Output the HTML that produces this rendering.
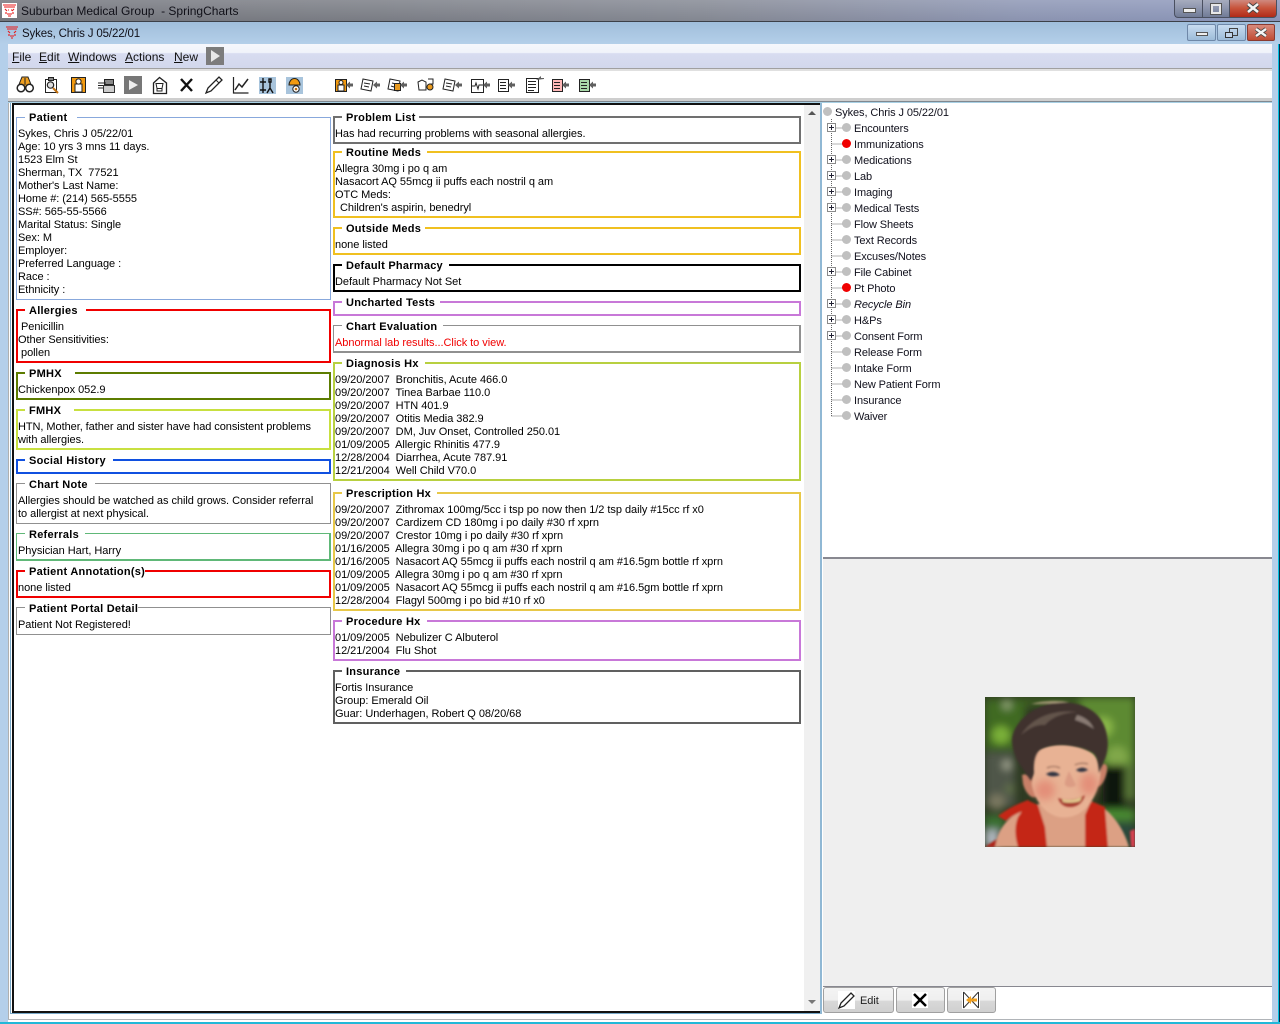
<!DOCTYPE html>
<html><head><meta charset="utf-8"><title>SpringCharts</title>
<style>
html,body{margin:0;padding:0;background:#fff}
#p{position:relative;width:1280px;height:1024px;overflow:hidden;background:#fff;font:11px/13px "Liberation Sans",sans-serif;color:#000}
#p div{position:absolute}
.b{box-sizing:border-box;background:#fff}
.t{font-weight:bold;background:#fff;padding:0 6px 0 4px;height:13px;white-space:nowrap;font-size:11px;letter-spacing:.25px;margin-top:1px}
.l{white-space:pre;height:13px;letter-spacing:-.04px;margin-top:1px}
.n{white-space:pre;height:13px;color:#10101c;letter-spacing:-.1px;margin-top:1px}
.d{width:9px;height:9px;border-radius:50%;background:#c0c0c0}
.m{white-space:pre;font-size:12px;line-height:14px;color:#111}
.m u{text-decoration:underline}
svg{position:absolute;overflow:visible}
</style></head><body><div id="p">

<!-- outer title bar -->
<div style="left:0;top:0;width:1280px;height:22px;background:linear-gradient(90deg,#76787f 0,#7d8088 30%,#878b96 55%,#8f98b6 80%,#8e99bf 100%)"></div>
<div style="left:0;top:0;width:1280px;height:22px;background:linear-gradient(180deg,rgba(255,255,255,.14),rgba(0,0,0,.04))"></div>
<div style="left:0;top:21px;width:1280px;height:1px;background:#3c4048"></div>
<div style="left:21px;top:4px;white-space:pre;font-size:12px;line-height:14px;color:#101018">Suburban Medical Group  - SpringCharts</div>
<svg style="left:2px;top:3px" width="16" height="16"><rect x="0" y="0" width="15" height="15" fill="#fff"/><path d="M1 2h13M2 4h11M3 6l2 2M12 6l-2 2M5 11h5M6 13h3M4 9v2M11 9v2" stroke="#e81818" stroke-width="1.100" fill="none"/><path d="M6 7h1M9 7h1" stroke="#e81818"/></svg>
<!-- caption buttons outer -->
<div style="left:1174px;top:-2px;width:28px;height:20px;box-sizing:border-box;border:1px solid #4a5060;border-right:0;border-radius:0 0 0 4px;background:linear-gradient(#a9afc0,#8e96ae 50%,#717b96)"></div>
<div style="left:1202px;top:-2px;width:27px;height:20px;box-sizing:border-box;border:1px solid #4a5060;border-right:0;background:linear-gradient(#a9afc0,#8e96ae 50%,#717b96)"></div>
<div style="left:1229px;top:-2px;width:48px;height:20px;box-sizing:border-box;border:1px solid #4a5060;border-radius:0 0 4px 0;background:linear-gradient(#d09088,#c8543c 50%,#b02a18)"></div>
<div style="left:1183px;top:8px;width:11px;height:3px;background:#eee;border:1px solid #555"></div>
<div style="left:1211px;top:4px;width:6px;height:6px;border:2px solid #e8e8e8;outline:1px solid #555"></div>
<svg style="left:1246px;top:3px" width="14" height="10"><path d="M2 1l10 8M12 1L2 9" stroke="#444" stroke-width="4.500"/><path d="M2 1l10 8M12 1L2 9" stroke="#f4f4f4" stroke-width="2.600"/></svg>

<!-- inner title bar -->
<div style="left:0;top:22px;width:1280px;height:22px;background:linear-gradient(#a0bedb,#b4cfe9)"></div>
<div style="left:22px;top:27px;white-space:pre;font-size:11.500px;line-height:14px;letter-spacing:-.15px;color:#101018">Sykes, Chris J 05/22/01</div>
<svg style="left:5px;top:26px" width="14" height="14"><path d="M1 1h12M2 3h10M3 5l2 2M11 5L9 7M5 10h4M6 12h2M4 8v2M10 8v2" stroke="#e81818" stroke-width="1.100" fill="none"/></svg>
<div style="left:1187px;top:24px;width:29px;height:17px;box-sizing:border-box;border:1px solid #6f88a8;border-radius:2px;background:linear-gradient(#c8dcf0,#9dbcd9)"></div>
<div style="left:1196px;top:32px;width:10px;height:2px;background:#eee;border:1px solid #555"></div>
<div style="left:1217px;top:24px;width:29px;height:17px;box-sizing:border-box;border:1px solid #6f88a8;border-radius:2px;background:linear-gradient(#c8dcf0,#9dbcd9)"></div>
<div style="left:1229px;top:28px;width:7px;height:6px;border:1px solid #444"></div>
<div style="left:1225px;top:32px;width:6px;height:4px;border:1px solid #333;background:#c0d4ea"></div>
<div style="left:1247px;top:24px;width:28px;height:17px;box-sizing:border-box;border:1px solid #8a3a30;border-radius:2px;background:linear-gradient(#d88a7c,#c04c34)"></div>
<svg style="left:1255px;top:28px" width="12" height="9"><path d="M1 1l10 7M11 1L1 8" stroke="#444" stroke-width="4"/><path d="M1 1l10 7M11 1L1 8" stroke="#f4f4f4" stroke-width="2.300"/></svg>

<!-- side frame -->
<div style="left:0;top:44px;width:8px;height:978px;background:#b4cfea"></div>
<div style="left:1272px;top:44px;width:6px;height:978px;background:#b4cfea"></div>
<div style="left:1278px;top:44px;width:1px;height:980px;background:#00bfe0"></div>
<div style="left:1279px;top:44px;width:1px;height:980px;background:#0b2a44"></div>
<div style="left:0;top:1022px;width:1280px;height:2px;background:#22b8d8"></div>

<!-- menu -->
<div style="left:8px;top:44px;width:1264px;height:24px;background:linear-gradient(#f6f7fc 0,#f0f3fa 36%,#d8dcf0 40%,#d2d8ec 100%)"></div>
<div style="left:8px;top:68px;width:1264px;height:1px;background:#a0a0a0"></div>
<div style="left:8px;top:69px;width:1264px;height:2px;background:#e0e0e0"></div>
<div class="m" style="left:12px;top:50px"><u>F</u>ile</div>
<div class="m" style="left:39px;top:50px"><u>E</u>dit</div>
<div class="m" style="left:68px;top:50px"><u>W</u>indows</div>
<div class="m" style="left:125px;top:50px"><u>A</u>ctions</div>
<div class="m" style="left:174px;top:50px"><u>N</u>ew</div>
<div style="left:206px;top:47px;width:18px;height:18px;background:#7c7c7c"></div>
<svg style="left:206px;top:47px" width="18" height="18"><path d="M5 3l9 6-9 6z" fill="#e8e8e8"/></svg>

<!-- toolbar -->
<div style="left:8px;top:71px;width:1264px;height:27px;background:#fff"></div>
<div style="left:8px;top:98px;width:1264px;height:3px;background:#cecece"></div>
<div style="left:8px;top:101px;width:1264px;height:1px;background:#808890"></div>
<div style="left:8px;top:102px;width:1264px;height:1px;background:#a8d0e4"></div>

<svg style="left:0;top:70px" width="620" height="30">
<!-- binoculars -->
<path d="M22 7h6l4 10H18z" fill="#f0a020" stroke="#222"/><path d="M25 8v7" stroke="#222"/><circle cx="21" cy="18" r="3.800" fill="#fff" stroke="#222" stroke-width="1.500"/><circle cx="29.500" cy="18" r="3.800" fill="#fff" stroke="#222" stroke-width="1.500"/>
<!-- clip w magnifier -->
<path d="M45.500 9.500h11v13h-11z" fill="#fff" stroke="#222"/><rect x="48.500" y="7.500" width="5" height="3" fill="#888" stroke="#222"/><circle cx="50.500" cy="15" r="3.200" fill="#ddd" stroke="#222" stroke-width="1.200"/><path d="M53 18l5 5" stroke="#c07010" stroke-width="2"/>
<!-- person orange -->
<rect x="71.500" y="7.500" width="14" height="15" fill="#f29a10" stroke="#222"/><rect x="75" y="14" width="7" height="8" fill="#fff" stroke="#222"/><circle cx="78.500" cy="11.500" r="2.600" fill="#fff" stroke="#222"/>
<!-- printer -->
<path d="M104.500 9.500h9v5h-9z" fill="#888" stroke="#222"/><path d="M98 13h8M98 15.500h8M98 18h8" stroke="#222"/><rect x="103.500" y="15.500" width="11" height="7" fill="#ccc" stroke="#333"/>
<!-- play -->
<rect x="124" y="6" width="18" height="18" fill="#777"/><path d="M129 10l9 5-9 5z" fill="#eee"/>
<!-- mortar -->
<path d="M153.500 13l6-5.500 7 5.500v10.500h-13z" fill="#fff" stroke="#222" stroke-width="1.300"/><path d="M156 13.500h7l-1 5h-5zM157 18.500v2.500h5v-2.500" fill="#fff" stroke="#222"/>
<!-- x -->
<path d="M181 9l11 12M192 9l-11 12" stroke="#111" stroke-width="2.400"/>
<!-- pencil -->
<path d="M206 23l2-5 11-11 3 3-11 11z" fill="#fff" stroke="#222" stroke-width="1.300"/><path d="M216 10l3 3" stroke="#222"/>
<!-- chart -->
<path d="M233.500 7v16h15" fill="none" stroke="#222" stroke-width="1.200"/><path d="M235 20l4-6 3 3 6-8" fill="none" stroke="#222" stroke-width="1.500"/>
<!-- figure -->
<rect x="259" y="7" width="17" height="17" fill="#a8c4dc"/><path d="M263 8v15M260 12h6M260 20h6M269 9h2v3h-2zM270 12v6l-3 5M270 18l3 5" stroke="#111" fill="none" stroke-width="1.400"/>
<!-- nurse -->
<rect x="286" y="7" width="17" height="17" fill="#a8c4dc"/><path d="M289 15a5.500 6.500 0 0 1 11 0z" fill="#f29a10" stroke="#222"/><circle cx="296" cy="19" r="3.200" fill="#fff" stroke="#222"/><circle cx="296" cy="19" r="1.300" fill="#c07010"/>
<!-- second group -->
<g stroke="#222">
<rect x="335.500" y="9.500" width="11" height="12" fill="#f29a10"/><rect x="338" y="15" width="6" height="6" fill="#fff"/><circle cx="341" cy="12.500" r="2" fill="#fff"/>
<path d="M363 9l10 2-2 10-10-2z" fill="#fff"/><path d="M364 13l6 1M364 16l5 1"/>
<path d="M390 9l10 2-2 10-10-2z" fill="#fff"/><path d="M392 13l4 1M391 16l3 1"/><rect x="394.500" y="13.500" width="6" height="7" fill="#e89a20"/>
<path d="M418 12l4-2 4 2v8h-7zM428 9h5v5h-4" fill="#fff"/><circle cx="430" cy="17" r="3" fill="#e89a20"/>
<path d="M445 9l10 2-2 10-10-2z" fill="#fff"/><path d="M446 13l6 1M446 16l5 1"/>
<rect x="471.500" y="9.500" width="12" height="13" fill="#fff"/><path d="M472 16h3l1-3 2 6 1-4h4" fill="none"/>
<rect x="498.500" y="9.500" width="10" height="12" fill="#fff"/><path d="M500 12.500h6M500 15.500h6M500 18.500h6"/>
<rect x="526.500" y="8.500" width="12" height="14" fill="#fff"/><path d="M528 11.500h8M528 14.500h8M528 17.500h8M528 20.500h6"/>
<rect x="552.500" y="9.500" width="10" height="12" fill="#ffb8b8"/><path d="M554 12.500h6M554 15.500h6M554 18.500h6"/>
<rect x="579.500" y="9.500" width="10" height="12" fill="#a8d8a8"/><path d="M581 12.500h6M581 15.500h6M581 18.500h6"/>
</g>
<path d="M346 15l4-3.500v2h3v3h-3v2zM373 15l4-3.500v2h3v3h-3v2zM400 15l4-3.500v2h3v3h-3v2zM455 15l4-3.500v2h3v3h-3v2zM483 15l4-3.500v2h3v3h-3v2zM508 15l4-3.500v2h3v3h-3v2zM562 15l4-3.500v2h3v3h-3v2zM589 15l4-3.500v2h3v3h-3v2z" fill="#606060"/>
<path d="M536 10l5-4v2h3v1z" fill="#606060"/>
</svg>

<!-- main panel -->
<div style="left:8px;top:103px;width:1px;height:916px;background:#b0b0b0"></div>
<div style="left:10px;top:103px;width:1px;height:911px;background:#78a8c8"></div>
<div style="left:10px;top:1013px;width:812px;height:1px;background:#78a8c8"></div>
<div style="left:12px;top:103px;width:808px;height:910px;box-sizing:border-box;border-top:2px solid #111;border-left:2px solid #111;border-bottom:2px solid #111;background:#fff"></div>
<div style="left:804px;top:105px;width:16px;height:906px;background:#f0f0f0"></div>
<div style="left:820px;top:103px;width:2px;height:911px;background:#90b8d4"></div>
<svg style="left:804px;top:105px" width="16" height="906"><path d="M4 10l4-4 4 4z" fill="#555"/><path d="M4 895l4 4 4-4z" fill="#777"/></svg>
<div style="left:8px;top:1019px;width:1264px;height:1px;background:#b0b4b8"></div>

<!-- LEFT COLUMN -->
<div class="b" style="left:16px;top:117px;width:315px;height:183px;border:1px solid #88a8dc"></div>
<div class="t" style="left:25px;top:111px;padding-right:10px">Patient</div>
<div class="l" style="left:18px;top:127px">Sykes, Chris J 05/22/01</div>
<div class="l" style="left:18px;top:140px">Age: 10 yrs 3 mns 11 days.</div>
<div class="l" style="left:18px;top:153px">1523 Elm St</div>
<div class="l" style="left:18px;top:166px">Sherman, TX  77521</div>
<div class="l" style="left:18px;top:179px">Mother's Last Name:</div>
<div class="l" style="left:18px;top:192px">Home #: (214) 565-5555</div>
<div class="l" style="left:18px;top:205px">SS#: 565-55-5566</div>
<div class="l" style="left:18px;top:218px">Marital Status: Single</div>
<div class="l" style="left:18px;top:231px">Sex: M</div>
<div class="l" style="left:18px;top:244px">Employer:</div>
<div class="l" style="left:18px;top:257px">Preferred Language :</div>
<div class="l" style="left:18px;top:270px">Race :</div>
<div class="l" style="left:18px;top:283px">Ethnicity :</div>

<div class="b" style="left:16px;top:309px;width:315px;height:54px;border:2px solid #f00000"></div>
<div class="t" style="left:25px;top:304px;padding-right:8px">Allergies</div>
<div class="l" style="left:21px;top:320px">Penicillin</div>
<div class="l" style="left:18px;top:333px">Other Sensitivities:</div>
<div class="l" style="left:21px;top:346px">pollen</div>

<div class="b" style="left:16px;top:372px;width:315px;height:28px;border:2px solid #5c7c00"></div>
<div class="t" style="left:25px;top:367px;padding-right:13px">PMHX</div>
<div class="l" style="left:18px;top:383px">Chickenpox 052.9</div>

<div class="b" style="left:16px;top:409px;width:315px;height:41px;border:2px solid #c8e040"></div>
<div class="t" style="left:25px;top:404px;padding-right:13px">FMHX</div>
<div class="l" style="left:18px;top:420px;letter-spacing:-.06px">HTN, Mother, father and sister have had consistent problems</div>
<div class="l" style="left:18px;top:433px">with allergies.</div>

<div class="b" style="left:16px;top:459px;width:315px;height:15px;border:2px solid #1050e0"></div>
<div class="t" style="left:25px;top:454px;padding-right:7px">Social History</div>

<div class="b" style="left:16px;top:483px;width:315px;height:41px;border:1px solid #909090"></div>
<div class="t" style="left:25px;top:478px;padding-right:7px">Chart Note</div>
<div class="l" style="left:18px;top:494px">Allergies should be watched as child grows. Consider referral</div>
<div class="l" style="left:18px;top:507px">to allergist at next physical.</div>

<div class="b" style="left:16px;top:533px;width:315px;height:28px;border:1px solid #60b878;border-bottom-width:2px;border-right-width:2px"></div>
<div class="t" style="left:25px;top:528px">Referrals</div>
<div class="l" style="left:18px;top:544px">Physician Hart, Harry</div>

<div class="b" style="left:16px;top:570px;width:315px;height:28px;border:2px solid #f00000"></div>
<div class="t" style="left:25px;top:565px;padding-right:0">Patient Annotation(s)</div>
<div class="l" style="left:18px;top:581px">none listed</div>

<div class="b" style="left:16px;top:607px;width:315px;height:28px;border:1px solid #909090"></div>
<div class="t" style="left:25px;top:602px;padding-right:0">Patient Portal Detail</div>
<div class="l" style="left:18px;top:618px">Patient Not Registered!</div>

<!-- RIGHT COLUMN -->
<div class="b" style="left:333px;top:116px;width:468px;height:28px;border:2px solid #707070"></div>
<div class="t" style="left:342px;top:111px;padding-right:3px">Problem List</div>
<div class="l" style="left:335px;top:127px">Has had recurring problems with seasonal allergies.</div>

<div class="b" style="left:333px;top:151px;width:468px;height:67px;border:2px solid #f0c020"></div>
<div class="t" style="left:342px;top:146px">Routine Meds</div>
<div class="l" style="left:335px;top:162px">Allegra 30mg i po q am</div>
<div class="l" style="left:335px;top:175px">Nasacort AQ 55mcg ii puffs each nostril q am</div>
<div class="l" style="left:335px;top:188px">OTC Meds:</div>
<div class="l" style="left:340px;top:201px">Children's aspirin, benedryl</div>

<div class="b" style="left:333px;top:227px;width:468px;height:28px;border:2px solid #f0c020"></div>
<div class="t" style="left:342px;top:222px;padding-right:4px">Outside Meds</div>
<div class="l" style="left:335px;top:238px">none listed</div>

<div class="b" style="left:333px;top:264px;width:468px;height:28px;border:2px solid #000"></div>
<div class="t" style="left:342px;top:259px">Default Pharmacy</div>
<div class="l" style="left:335px;top:275px">Default Pharmacy Not Set</div>

<div class="b" style="left:333px;top:301px;width:468px;height:15px;border:2px solid #c878d8"></div>
<div class="t" style="left:342px;top:296px;padding-right:5px">Uncharted Tests</div>

<div class="b" style="left:333px;top:325px;width:468px;height:28px;border:1px solid #909090;border-bottom-width:2px;border-right-width:2px"></div>
<div class="t" style="left:342px;top:320px">Chart Evaluation</div>
<div class="l" style="left:335px;top:336px;color:#f00000">Abnormal lab results...Click to view.</div>

<div class="b" style="left:333px;top:362px;width:468px;height:119px;border:2px solid #b8d040"></div>
<div class="t" style="left:342px;top:357px">Diagnosis Hx</div>
<div class="l" style="left:335px;top:373px">09/20/2007  Bronchitis, Acute 466.0</div>
<div class="l" style="left:335px;top:386px">09/20/2007  Tinea Barbae 110.0</div>
<div class="l" style="left:335px;top:399px">09/20/2007  HTN 401.9</div>
<div class="l" style="left:335px;top:412px">09/20/2007  Otitis Media 382.9</div>
<div class="l" style="left:335px;top:425px">09/20/2007  DM, Juv Onset, Controlled 250.01</div>
<div class="l" style="left:335px;top:438px">01/09/2005  Allergic Rhinitis 477.9</div>
<div class="l" style="left:335px;top:451px">12/28/2004  Diarrhea, Acute 787.91</div>
<div class="l" style="left:335px;top:464px">12/21/2004  Well Child V70.0</div>

<div class="b" style="left:333px;top:492px;width:468px;height:119px;border:2px solid #e8c848"></div>
<div class="t" style="left:342px;top:487px">Prescription Hx</div>
<div class="l" style="left:335px;top:503px">09/20/2007  Zithromax 100mg/5cc i tsp po now then 1/2 tsp daily #15cc rf x0</div>
<div class="l" style="left:335px;top:516px">09/20/2007  Cardizem CD 180mg i po daily #30 rf xprn</div>
<div class="l" style="left:335px;top:529px">09/20/2007  Crestor 10mg i po daily #30 rf xprn</div>
<div class="l" style="left:335px;top:542px">01/16/2005  Allegra 30mg i po q am #30 rf xprn</div>
<div class="l" style="left:335px;top:555px">01/16/2005  Nasacort AQ 55mcg ii puffs each nostril q am #16.5gm bottle rf xprn</div>
<div class="l" style="left:335px;top:568px">01/09/2005  Allegra 30mg i po q am #30 rf xprn</div>
<div class="l" style="left:335px;top:581px">01/09/2005  Nasacort AQ 55mcg ii puffs each nostril q am #16.5gm bottle rf xprn</div>
<div class="l" style="left:335px;top:594px">12/28/2004  Flagyl 500mg i po bid #10 rf x0</div>

<div class="b" style="left:333px;top:620px;width:468px;height:41px;border:2px solid #c878d8"></div>
<div class="t" style="left:342px;top:615px">Procedure Hx</div>
<div class="l" style="left:335px;top:631px">01/09/2005  Nebulizer C Albuterol</div>
<div class="l" style="left:335px;top:644px">12/21/2004  Flu Shot</div>

<div class="b" style="left:333px;top:670px;width:468px;height:54px;border:2px solid #606060"></div>
<div class="t" style="left:342px;top:665px">Insurance</div>
<div class="l" style="left:335px;top:681px">Fortis Insurance</div>
<div class="l" style="left:335px;top:694px">Group: Emerald Oil</div>
<div class="l" style="left:335px;top:707px">Guar: Underhagen, Robert Q 08/20/68</div>

<!-- TREE -->
<svg style="left:822px;top:105px" width="80" height="320">
<path d="M9.500 14V311M9.500 23h13M9.500 39h13M9.500 55h13M9.500 71h13M9.500 87h13M9.500 103h13M9.500 119h13M9.500 135h13M9.500 151h13M9.500 167h13M9.500 183h13M9.500 199h13M9.500 215h13M9.500 231h13M9.500 247h13M9.500 263h13M9.500 279h13M9.500 295h13M9.500 311h13" fill="none" stroke="#666" stroke-dasharray="1 1"/>
<g fill="#fff" stroke="#8a8a8a"><rect x="5.500" y="18.500" width="8" height="8"/><rect x="5.500" y="50.500" width="8" height="8"/><rect x="5.500" y="66.500" width="8" height="8"/><rect x="5.500" y="82.500" width="8" height="8"/><rect x="5.500" y="98.500" width="8" height="8"/><rect x="5.500" y="162.500" width="8" height="8"/><rect x="5.500" y="194.500" width="8" height="8"/><rect x="5.500" y="210.500" width="8" height="8"/><rect x="5.500" y="226.500" width="8" height="8"/></g>
<path d="M7 22.500h5M9.500 20v5M7 54.500h5M9.500 52v5M7 70.500h5M9.500 68v5M7 86.500h5M9.500 84v5M7 102.500h5M9.500 100v5M7 166.500h5M9.500 164v5M7 198.500h5M9.500 196v5M7 214.500h5M9.500 212v5M7 230.500h5M9.500 228v5" stroke="#223"/>
</svg>
<div style="left:823px;top:107px;width:9px;height:9px;border-radius:50%;background:#c0c0c0"></div>
<div class="n" style="left:835px;top:106px">Sykes, Chris J 05/22/01</div>
<div class="d" style="left:842px;top:123px"></div><div class="n" style="left:854px;top:122px">Encounters</div>
<div class="d" style="left:842px;top:139px;background:#f00000"></div><div class="n" style="left:854px;top:138px">Immunizations</div>
<div class="d" style="left:842px;top:155px"></div><div class="n" style="left:854px;top:154px">Medications</div>
<div class="d" style="left:842px;top:171px"></div><div class="n" style="left:854px;top:170px">Lab</div>
<div class="d" style="left:842px;top:187px"></div><div class="n" style="left:854px;top:186px">Imaging</div>
<div class="d" style="left:842px;top:203px"></div><div class="n" style="left:854px;top:202px">Medical Tests</div>
<div class="d" style="left:842px;top:219px"></div><div class="n" style="left:854px;top:218px">Flow Sheets</div>
<div class="d" style="left:842px;top:235px"></div><div class="n" style="left:854px;top:234px">Text Records</div>
<div class="d" style="left:842px;top:251px"></div><div class="n" style="left:854px;top:250px">Excuses/Notes</div>
<div class="d" style="left:842px;top:267px"></div><div class="n" style="left:854px;top:266px">File Cabinet</div>
<div class="d" style="left:842px;top:283px;background:#f00000"></div><div class="n" style="left:854px;top:282px">Pt Photo</div>
<div class="d" style="left:842px;top:299px"></div><div class="n" style="left:854px;top:298px;font-style:italic">Recycle Bin</div>
<div class="d" style="left:842px;top:315px"></div><div class="n" style="left:854px;top:314px">H&amp;Ps</div>
<div class="d" style="left:842px;top:331px"></div><div class="n" style="left:854px;top:330px">Consent Form</div>
<div class="d" style="left:842px;top:347px"></div><div class="n" style="left:854px;top:346px">Release Form</div>
<div class="d" style="left:842px;top:363px"></div><div class="n" style="left:854px;top:362px">Intake Form</div>
<div class="d" style="left:842px;top:379px"></div><div class="n" style="left:854px;top:378px">New Patient Form</div>
<div class="d" style="left:842px;top:395px"></div><div class="n" style="left:854px;top:394px">Insurance</div>
<div class="d" style="left:842px;top:411px"></div><div class="n" style="left:854px;top:410px">Waiver</div>

<!-- photo panel -->
<div style="left:823px;top:557px;width:449px;height:2px;background:#888890"></div>
<div style="left:823px;top:559px;width:449px;height:427px;background:#efefef"></div>
<div style="left:823px;top:986px;width:449px;height:1px;background:#888890"></div>
<svg style="left:985px;top:697px" width="150" height="150" viewBox="0 0 150 150">
<defs><filter id="f1" x="-20%" y="-20%" width="140%" height="140%"><feGaussianBlur stdDeviation="4"/></filter><filter id="f2" x="-5%" y="-5%" width="110%" height="110%"><feGaussianBlur stdDeviation="1"/></filter><filter id="f3" x="-50%" y="-50%" width="200%" height="200%"><feGaussianBlur stdDeviation="4"/></filter><clipPath id="c"><rect width="150" height="150"/></clipPath></defs>
<g clip-path="url(#c)">
<rect width="150" height="150" fill="#2e3a22"/>
<g filter="url(#f1)">
<rect x="0" y="0" width="150" height="10" fill="#3a5a20"/>
<rect x="95" y="0" width="55" height="68" fill="#5d8a30"/>
<rect x="0" y="5" width="40" height="48" fill="#3f6a24"/>
<circle cx="16" cy="38" r="9" fill="#7ab038"/><circle cx="22" cy="8" r="5" fill="#8aa070"/><circle cx="118" cy="30" r="10" fill="#8ab848"/><circle cx="132" cy="60" r="11" fill="#80a848"/><circle cx="115" cy="60" r="7" fill="#5a8830"/>
<rect x="0" y="55" width="30" height="55" fill="#50564a"/><circle cx="22" cy="68" r="5" fill="#9a9e8a"/><circle cx="12" cy="105" r="8" fill="#7a7860"/><circle cx="25" cy="92" r="5" fill="#607048"/>
<rect x="118" y="68" width="22" height="45" fill="#0e1208"/><rect x="140" y="68" width="10" height="35" fill="#5a7838"/>
<rect x="118" y="112" width="32" height="12" fill="#4a8a30"/><rect x="125" y="125" width="25" height="25" fill="#2a4a3a"/>
<rect x="0" y="118" width="20" height="15" fill="#3a7030"/><rect x="0" y="133" width="14" height="17" fill="#b0b8c0"/>
</g>
<g filter="url(#f2)">
<path d="M145 134l5-2v18h-4z" fill="#d84050"/>
<path d="M10 150C12 135 20 122 38 112L60 105 100 105 120 112C132 122 140 136 144 150z" fill="#dca084"/>
<path d="M0 150l12-8-2 8z" fill="#b02018"/>
<path d="M13 119C22 112 32 107 43 103L52 110C42 112 30 116 21 124z" fill="#c42818"/>
<path d="M33 150C30 140 29 130 33 120L44 104 53 108 60 130 62 150z" fill="#c42818"/>
<path d="M100 150V118L106 104 120 110 123 150z" fill="#c42818"/>
<path d="M37 78c5-2 9 0 12 4l2 18c-6 2-11-6-13-13zM113 72l4-5c4-1 6 2 5 7-1 6-4 14-9 16z" fill="#c88068"/>
<path d="M47 58C52 50 70 46 85 48c16 2 27 8 30 20 2 14-3 28-9 37-8 12-20 17-32 15C60 117 50 104 47 88z" fill="#e8b294"/>
</g>
<ellipse cx="60" cy="93" rx="10" ry="10" fill="#e07868" opacity=".6" filter="url(#f3)"/><ellipse cx="104" cy="87" rx="9" ry="11" fill="#e07868" opacity=".6" filter="url(#f3)"/>
<g filter="url(#f2)">
<path d="M46 84C38 72 26 58 27 42 29 24 48 10 68 6c22-3 42 4 50 20 6 12 6 26 2 36l-6 14c-1-12-2-18-8-21C90 47 70 45 56 52c-5 3-8 12-7 24z" fill="#40332f"/>
<path d="M36 38C46 22 66 12 92 15c-16 1-26 6-32 13-8-1-16 3-24 10z" fill="#64544c"/><path d="M92 18c8 2 14 7 17 14-6-4-12-7-19-9z" fill="#8a7c74"/>
<path d="M46 7c10-3 26-4 38-2-12 1-26 2-38 2z" fill="#b0a080"/>
<path d="M61 77c5-3 10-3 14 1-5 2-10 2-14-1zM91 73c4-3 9-3 12 0-4 2-8 3-12 0z" fill="#2e3040"/>
<path d="M62 71c4-2 9-2 13 0M90 68c4-2 9-2 13-1" stroke="#8a6050" stroke-width="1" fill="none"/>
<path d="M84 74c-3 7-5 12-4 14 3 3 8 3 11 0z" fill="#dc9c84"/>
<path d="M73 101c9 3 19 2 27-3-2 8-8 12-15 12-6 0-10-3-12-9z" fill="#a83c30"/><path d="M77 102c7 2 13 1 20-2l-2 4c-5 2-12 2-17 1z" fill="#e4cc90"/>
</g></g></svg>

<!-- buttons -->
<div style="left:823px;top:987px;width:71px;height:26px;box-sizing:border-box;border:1px solid #a0a0a0;border-radius:3px;background:linear-gradient(#f4f4f4 0,#efefef 50%,#d8d8d8 55%,#d0d0d0)"></div>
<div style="left:838px;top:991px;width:17px;height:18px;background:#fff"></div>
<svg style="left:838px;top:991px" width="17" height="18"><path d="M1 17l2-5L13 2l3 3L6 15z" fill="#fff" stroke="#222" stroke-width="1.300"/></svg>
<div class="l" style="left:860px;top:994px;color:#222">Edit</div>
<div style="left:896px;top:987px;width:49px;height:26px;box-sizing:border-box;border:1px solid #a0a0a0;border-radius:3px;background:linear-gradient(#f4f4f4 0,#efefef 50%,#d8d8d8 55%,#d0d0d0)"></div>
<div style="left:912px;top:992px;width:16px;height:16px;background:#fff"></div>
<svg style="left:912px;top:992px" width="16" height="16"><path d="M2 2l12 12M14 2L2 14" stroke="#000" stroke-width="2.500"/></svg>
<div style="left:947px;top:987px;width:49px;height:26px;box-sizing:border-box;border:1px solid #a0a0a0;border-radius:3px;background:linear-gradient(#f4f4f4 0,#efefef 50%,#d8d8d8 55%,#d0d0d0)"></div>
<svg style="left:962px;top:991px" width="18" height="18"><rect x="0" y="0" width="18" height="18" fill="#fff"/><path d="M1.500 1l15 16M16.500 1L1.500 17M1.500 1v16M16.500 1v16" stroke="#333" fill="none"/><path d="M4 9l5-4v2.500h6v3H9V13z" fill="#f0a020"/></svg>

</div></body></html>
